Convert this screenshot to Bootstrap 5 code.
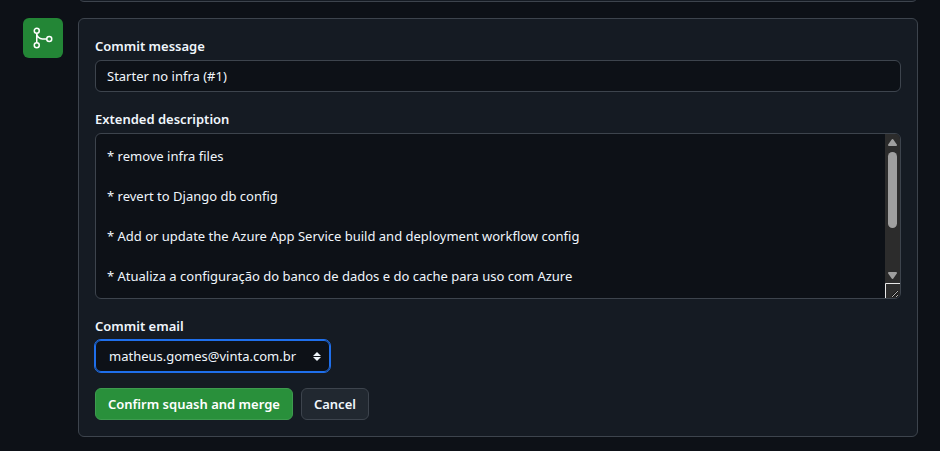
<!DOCTYPE html>
<html lang="en" data-bs-theme="dark">
<head>
<meta charset="utf-8">
<meta name="viewport" content="width=device-width, initial-scale=1">
<title>Squash and merge</title>
<link href="https://cdn.jsdelivr.net/npm/bootstrap@5.3.0/dist/css/bootstrap.min.css" rel="stylesheet">
<style>
  body { background: #0d1117; color: #f0f6fc; font-family: "Segoe UI", "Noto Sans", "Open Sans", sans-serif; font-size: 13px; line-height: 22px; overflow: hidden; }
  .merge-page { padding: 0 22px 14px 23px; }
  .previous-box { height: 2px; margin-left: 55px; overflow: hidden; display: flex; align-items: flex-end; }
  .previous-box > div { flex: 1; height: 20px; flex-shrink: 0; }
  .merge-row { gap: 15px; margin-top: 16px; }
  .merge-badge { width: 40px; height: 40px; background: #238636; border-radius: 6px; }
  .panel { background: #151b23; border: 1px solid #3d444d; border-radius: 6px; }
  .merge-form label { font-weight: 600; margin-bottom: 3px; display: block; }
  .field { background-color: #0d1117; border: 1px solid #3d444d; border-radius: 6px; color: #f0f6fc; font-size: 13px; }
  .message-input.form-control { height: 32px; padding: 5px 11px; line-height: 20px; background-color: #0d1117; color: #f0f6fc; }
  .description-area { height: 166px; overflow: hidden; }
  .description-area textarea { background: transparent; border: 0; outline: 0; color: inherit; resize: none; overflow: hidden; padding: 12px 11px; line-height: 20px; min-width: 0; }
  .scroll-strip { width: 15px; background: #2c2c2c; flex: none; }
  .email-select.form-select { width: 235px; height: 32px; padding: 4px 32px 4px 13px; line-height: 20px; border-color: #1f6feb; outline: 1px solid #1f6feb; color: #f0f6fc;
    background: #0d1117 url("data:image/svg+xml,%3Csvg xmlns='http://www.w3.org/2000/svg' viewBox='0 0 8 9'%3E%3Cpath d='M0 4 4 0l4 4zM0 5h8l-4 4z' fill='%23f0f6fc'/%3E%3C/svg%3E") no-repeat right 8px center / 8px 9px; }
  .merge-form .btn { height: 32px; padding: 5px 12px; font-size: 13px; font-weight: 600; line-height: 20px; border-radius: 6px; }
  .btn.btn-merge { background: #29903b; border-color: #3e9b4f; color: #fff; }
  .btn.btn-cancel { background: #212830; border-color: #3d444d; color: #f0f6fc; }
</style>
<script src="https://cdn.jsdelivr.net/npm/bootstrap@5.3.0/dist/js/bootstrap.bundle.min.js" defer></script>
</head>
<body>
<main class="merge-page">
  <div class="previous-box"><div class="panel"></div></div>
  <div class="merge-row d-flex align-items-start">
    <div class="merge-badge d-flex align-items-center justify-content-center flex-shrink-0">
      <svg width="24" height="24" viewBox="0 0 24 24" fill="none" stroke="#fff" stroke-width="1.5" aria-hidden="true">
        <circle cx="5.75" cy="4.75" r="2.5"/><circle cx="5.75" cy="19.25" r="2.5"/><circle cx="18.25" cy="13" r="2.5"/>
        <path d="M5.75 7.25v9.5M5.75 7.25C5.75 10.4 8.3 13 11.5 13h4.25"/>
      </svg>
    </div>
    <form class="merge-form panel p-3 flex-grow-1">
      <div class="mb-3">
        <label for="message">Commit message</label>
        <input id="message" type="text" class="form-control field message-input" value="Starter no infra (#1)">
      </div>
      <div class="mb-3">
        <label for="description">Extended description</label>
        <div class="field description-area d-flex">
          <textarea id="description" class="flex-grow-1" spellcheck="false">* remove infra files

* revert to Django db config

* Add or update the Azure App Service build and deployment workflow config

* Atualiza a configuração do banco de dados e do cache para uso com Azure
</textarea>
          <svg class="scroll-strip" width="15" height="164" viewBox="0 0 15 164" aria-hidden="true">
            <path d="M7.5 6 11 11H4Z M7.5 144 11 139H4Z" fill="#9f9f9f" stroke="#9f9f9f" stroke-width="2" stroke-linejoin="round"/>
            <rect x="3" y="18" width="9" height="76" rx="4.5" fill="#9f9f9f"/>
            <path d="M.5 164V149.500H15" fill="none" stroke="#e8e8e8"/>
            <path d="M7 163l6-6M11 163l2-2" stroke="#101010" stroke-width="2"/>
            <path d="M7 163l6-6M11 163l2-2" stroke="#b5b5b5"/>
          </svg>
        </div>
      </div>
      <div class="mb-3">
        <label for="email">Commit email</label>
        <select id="email" class="form-select field email-select"><option>matheus.gomes@vinta.com.br</option></select>
      </div>
      <div class="d-flex gap-2">
        <button type="submit" class="btn btn-merge">Confirm squash and merge</button>
        <button type="button" class="btn btn-cancel">Cancel</button>
      </div>
    </form>
  </div>
</main>
</body>
</html>
